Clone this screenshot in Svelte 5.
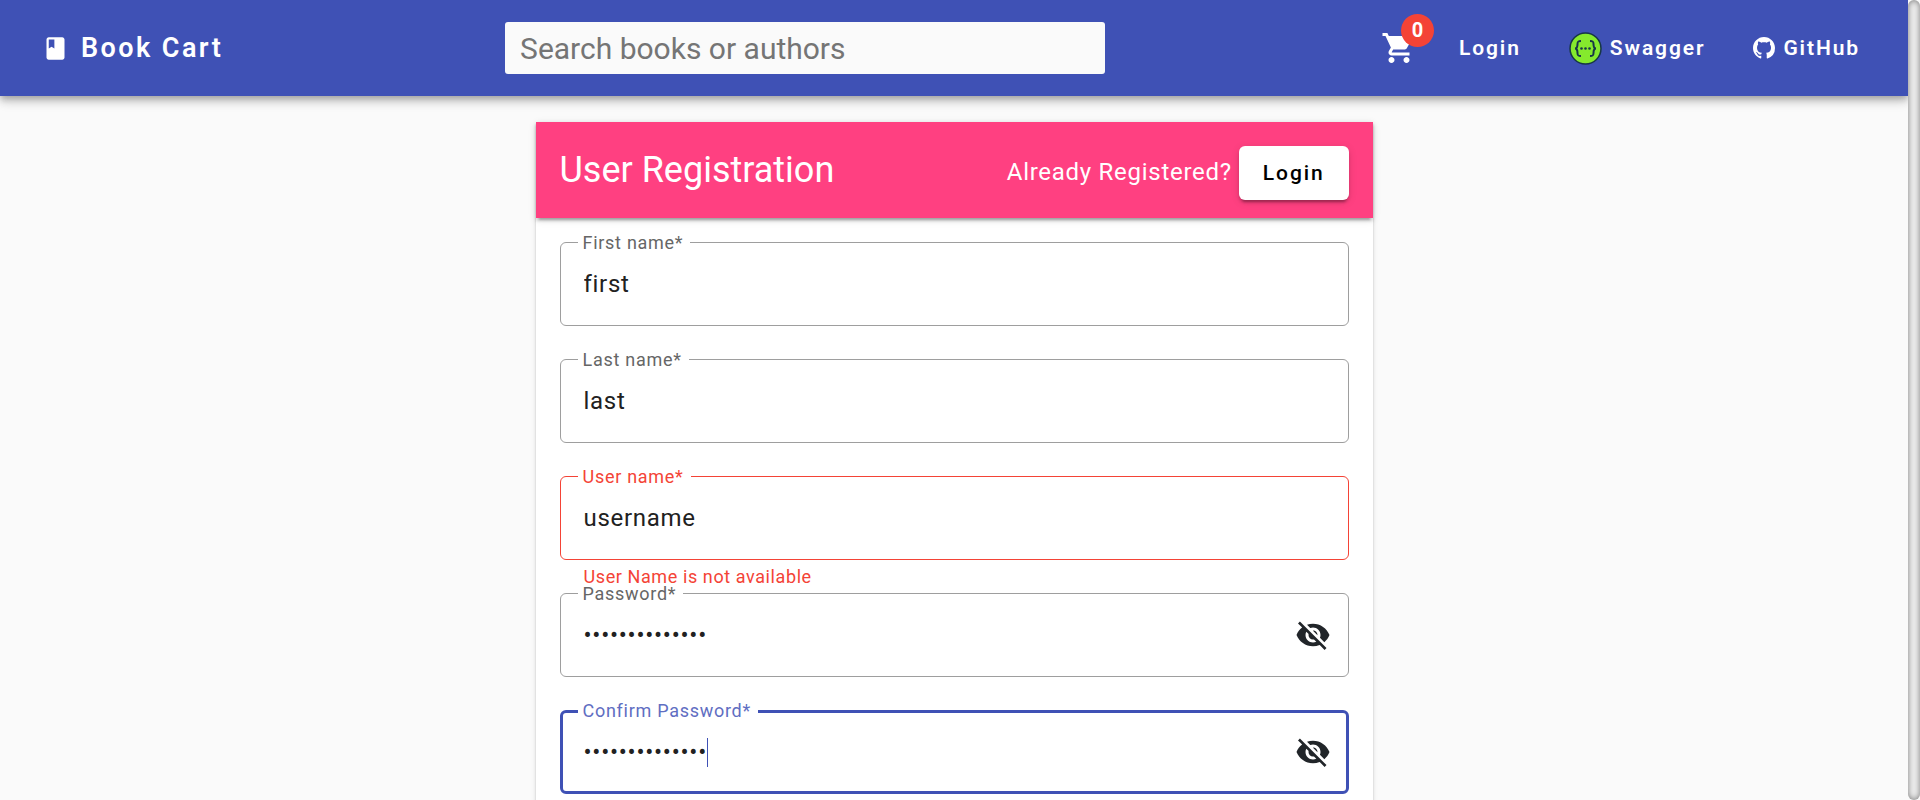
<script lang="ts">
  type Field = {
    id: string;
    label: string;
    value: string;
    secret?: boolean;
    error?: string;
    active?: boolean;
  };

  let fields = $state<Field[]>([
    { id: 'first-name', label: 'First name', value: 'first' },
    { id: 'last-name', label: 'Last name', value: 'last' },
    { id: 'user-name', label: 'User name', value: 'username', error: 'User Name is not available' },
    { id: 'password', label: 'Password', value: 'Abcdefgh123456', secret: true },
    { id: 'confirm', label: 'Confirm Password', value: 'Abcdefgh123456', secret: true, active: true }
  ]);
</script>

<div class="app">
  <div class="page">
    <header class="toolbar">
      <a class="nav-link brand" href="#home">
        <svg class="book" viewBox="0 0 24 24" aria-hidden="true"><path d="M18 2H6c-1.1 0-2 .9-2 2v16c0 1.1.9 2 2 2h12c1.1 0 2-.9 2-2V4c0-1.1-.9-2-2-2zM6 4h5v8l-2.500-1.500L6 12V4z" /></svg>
        Book Cart
      </a>

      <input class="search" type="search" placeholder="Search books or authors" aria-label="Search books or authors" />

      <nav>
        <button class="cart" type="button" aria-label="Shopping cart">
          <svg viewBox="0 0 24 24" aria-hidden="true"><path d="M7 18c-1.100 0-1.990.9-1.990 2S5.900 22 7 22s2-.9 2-2-.9-2-2-2zM1 2v2h2l3.600 7.590-1.350 2.450c-.16.28-.25.61-.25.96 0 1.100.9 2 2 2h12v-2H7.420c-.14 0-.25-.11-.25-.25l.03-.12.9-1.630h7.450c.75 0 1.410-.41 1.750-1.030l3.580-6.490c.08-.14.12-.31.12-.48 0-.55-.45-1-1-1H5.210l-.94-2H1zm16 16c-1.100 0-1.990.9-1.990 2s.89 2 1.990 2 2-.9 2-2-.9-2-2-2z" /></svg>
          <span class="badge">0</span>
        </button>
        <a class="nav-link" href="#login">Login</a>
        <a class="nav-link" href="#swagger">
          <svg class="swagger" viewBox="0 0 66 66" aria-hidden="true">
            <circle cx="33" cy="33" r="31" fill="#85ea2d" stroke="#173647" stroke-width="3" />
            <g fill="none" stroke="#173647" stroke-width="4">
              <path d="M24 18c-6 0-7 1-7 6 0 5 0 9-5 9 5 0 5 4 5 9 0 5 1 6 7 6" />
              <path d="M42 18c6 0 7 1 7 6 0 5 0 9 5 9-5 0-5 4-5 9 0 5-1 6-7 6" />
            </g>
            <g fill="#173647"><circle cx="25" cy="33" r="2.600" /><circle cx="33" cy="33" r="2.600" /><circle cx="41" cy="33" r="2.600" /></g>
          </svg>
          Swagger
        </a>
        <a class="nav-link" href="#github">
          <svg class="github" viewBox="0 0 16 16" aria-hidden="true"><path d="M8 0C3.580 0 0 3.580 0 8c0 3.540 2.290 6.530 5.470 7.590.4.07.55-.17.55-.38 0-.19-.01-.82-.01-1.490-2.010.37-2.530-.49-2.690-.94-.09-.23-.48-.94-.82-1.130-.28-.15-.68-.52-.01-.53.63-.01 1.080.58 1.230.82.72 1.210 1.870.87 2.330.66.07-.52.28-.87.51-1.070-1.780-.2-3.640-.89-3.640-3.950 0-.87.31-1.590.82-2.150-.08-.2-.36-1.020.08-2.120 0 0 .67-.21 2.200.82.64-.18 1.320-.27 2-.27s1.360.09 2 .27c1.530-1.040 2.200-.82 2.200-.82.44 1.100.16 1.920.08 2.120.51.56.82 1.270.82 2.150 0 3.070-1.870 3.750-3.650 3.950.29.25.54.73.54 1.480 0 1.070-.01 1.930-.01 2.200 0 .21.15.46.55.38A8.010 8.010 0 0 0 16 8c0-4.420-3.580-8-8-8z" /></svg>
          GitHub
        </a>
      </nav>
    </header>

    <main>
      <section class="card">
        <div class="card-header">
          <h1>User Registration</h1>
          <div class="switch">
            <span>Already Registered?</span>
            <button type="button">Login</button>
          </div>
        </div>

        <form>
          {#each fields as field (field.id)}
            <div class="field" class:invalid={field.error} class:active={field.active}>
              <label for={field.id}>{field.label}*</label>
              <div class="entry">
                <input id={field.id} type={field.secret ? 'password' : 'text'} bind:value={field.value} />
                {#if field.active}<span class="caret"></span>{/if}
              </div>
              {#if field.secret}
                <button class="reveal" type="button" aria-label="Show password">
                  <svg viewBox="0 0 24 24" aria-hidden="true"><path d="M12 7c2.760 0 5 2.240 5 5 0 .65-.13 1.260-.36 1.830l2.920 2.920c1.510-1.260 2.700-2.890 3.430-4.750-1.730-4.390-6-7.500-11-7.500-1.400 0-2.740.25-3.980.7l2.160 2.160C10.740 7.130 11.350 7 12 7zM2 4.270l2.280 2.280.46.46C3.080 8.300 1.780 10.020 1 12c1.730 4.390 6 7.500 11 7.500 1.550 0 3.030-.3 4.380-.84l.42.42L19.730 22 21 20.730 3.270 3 2 4.270zM7.530 9.800l1.550 1.550c-.05.21-.08.43-.08.65 0 1.660 1.340 3 3 3 .22 0 .44-.03.65-.08l1.550 1.550c-.67.33-1.410.53-2.200.53-2.760 0-5-2.240-5-5 0-.79.2-1.530.53-2.200zm4.310-.78l3.150 3.150.02-.16c0-1.660-1.340-3-3-3l-.17.01z" /></svg>
                </button>
              {/if}
            </div>
            <p class="hint" role={field.error ? 'alert' : undefined}>{field.error ?? ''}</p>
          {/each}
        </form>
      </section>
    </main>
  </div>
  <div class="scroll-thumb"></div>
</div>

<style>
  :global(body) {
    margin: 0;
    background: #fafafa;
    font-family: Roboto, sans-serif;
  }
  .app {
    display: grid;
    grid-template-columns: minmax(0, 1fr) 12px;
    height: 100vh;
  }
  .page {
    overflow: hidden auto;
    scrollbar-width: none;
  }
  .scroll-thumb {
    border-radius: 6px;
    background: #eee;
    box-shadow: inset 0 0 6px rgba(0, 0, 0, 0.5);
  }
  button,
  input {
    box-sizing: border-box;
    margin: 0;
    border: 0;
    font-family: inherit;
  }
  button {
    cursor: pointer;
  }
  svg {
    display: block;
    fill: currentColor;
  }

  .toolbar {
    position: relative;
    display: flex;
    align-items: center;
    justify-content: space-between;
    box-sizing: border-box;
    height: 96px;
    padding: 0 30px 0 24px;
    background: #3f51b5;
    color: #fff;
    box-shadow:
      0 3px 6px -1px rgba(0, 0, 0, 0.2),
      0 6px 8px 0 rgba(0, 0, 0, 0.14),
      0 2px 15px 0 rgba(0, 0, 0, 0.12);
  }
  .nav-link {
    display: flex;
    align-items: center;
    gap: 8px;
    padding: 0 18px;
    color: inherit;
    font-size: 21px;
    font-weight: 600;
    line-height: 54px;
    letter-spacing: 0.09em;
    text-decoration: none;
  }
  .brand {
    gap: 12px;
    font-size: 27px;
  }
  .book {
    width: 27px;
    height: 27px;
  }
  .search {
    width: 600px;
    height: 52px;
    padding: 0 15px;
    border-radius: 3px;
    background: #fafafa;
    font-size: 30px;
  }
  .search::placeholder {
    color: #757575;
  }
  nav {
    display: flex;
    align-items: center;
    gap: 12px;
  }
  .cart {
    position: relative;
    padding: 12px;
    background: none;
    color: #fff;
  }
  .cart svg,
  .reveal svg {
    width: 36px;
    height: 36px;
  }
  .badge {
    position: absolute;
    top: -4px;
    right: -5px;
    width: 33px;
    border-radius: 50%;
    background: #f44336;
    font-size: 20px;
    font-weight: 700;
    line-height: 33px;
    text-align: center;
  }
  .swagger {
    width: 33px;
    height: 33px;
  }
  .github {
    width: 22px;
    height: 22px;
  }

  main {
    box-sizing: border-box;
    max-width: 1710px;
    margin: 0 auto;
    padding: 26px 18px;
  }
  .card {
    width: 50%;
    margin: 0 auto;
    background: #fff;
    box-shadow:
      0 3px 2px -2px rgba(0, 0, 0, 0.2),
      0 2px 2px 0 rgba(0, 0, 0, 0.14),
      0 2px 5px 0 rgba(0, 0, 0, 0.12);
  }
  .card-header {
    display: flex;
    align-items: center;
    justify-content: space-between;
    height: 96px;
    padding: 0 24px;
    background: #ff4081;
    color: #fff;
    box-shadow:
      0 5px 2px -3px rgba(0, 0, 0, 0.2),
      0 3px 3px 0 rgba(0, 0, 0, 0.14),
      0 2px 8px 0 rgba(0, 0, 0, 0.12);
  }
  h1 {
    margin: 0;
    font-size: 36px;
    font-weight: 400;
    line-height: 48px;
  }
  .switch {
    display: flex;
    align-items: baseline;
    gap: 7px;
    padding-top: 6px;
    font-size: 24px;
    letter-spacing: 0.03em;
  }
  .switch button {
    height: 54px;
    padding: 0 24px;
    border-radius: 6px;
    background: #fff;
    color: #000;
    font-size: 21px;
    font-weight: 500;
    letter-spacing: 0.09em;
    box-shadow:
      0 5px 2px -3px rgba(0, 0, 0, 0.2),
      0 3px 3px 0 rgba(0, 0, 0, 0.14),
      0 2px 8px 0 rgba(0, 0, 0, 0.12);
  }

  form {
    padding: 24px;
  }
  .field {
    --line: #9e9e9e;
    --label: #666;
    position: relative;
    display: flex;
    align-items: center;
    box-sizing: border-box;
    height: 84px;
    padding: 0 17px 0 23px;
    border: 1px solid var(--line);
    border-radius: 6px;
  }
  .invalid {
    --line: #f44336;
    --label: #f44336;
  }
  .active {
    --line: #3f51b5;
    --label: #5f6ec2;
    padding: 0 15px 0 21px;
    border-width: 3px;
  }
  .field label {
    position: absolute;
    top: -9px;
    left: 17px;
    padding: 0 7px 0 5px;
    background: #fff;
    color: var(--label);
    font-size: 18px;
    line-height: 18px;
    letter-spacing: 0.04em;
  }
  .active label {
    top: -11px;
    left: 15px;
  }
  .entry {
    display: flex;
    flex: 1;
    align-items: center;
    min-width: 0;
  }
  .entry input {
    flex: 1;
    min-width: 0;
    height: 36px;
    padding: 0;
    outline: 0;
    background: none;
    color: #212121;
    font-size: 24px;
    letter-spacing: 0.03em;
  }
  .active .entry input {
    flex: none;
    field-sizing: content;
    caret-color: #3f51b5;
  }
  .caret {
    width: 1px;
    height: 29px;
    background: #3f51b5;
  }
  .reveal {
    padding: 0;
    background: none;
    color: #212529;
  }
  .hint {
    box-sizing: border-box;
    height: 33px;
    margin: 0;
    padding: 2px 24px 0;
    color: #f44336;
    font-size: 18px;
    line-height: 30px;
    letter-spacing: 0.033em;
  }
</style>
